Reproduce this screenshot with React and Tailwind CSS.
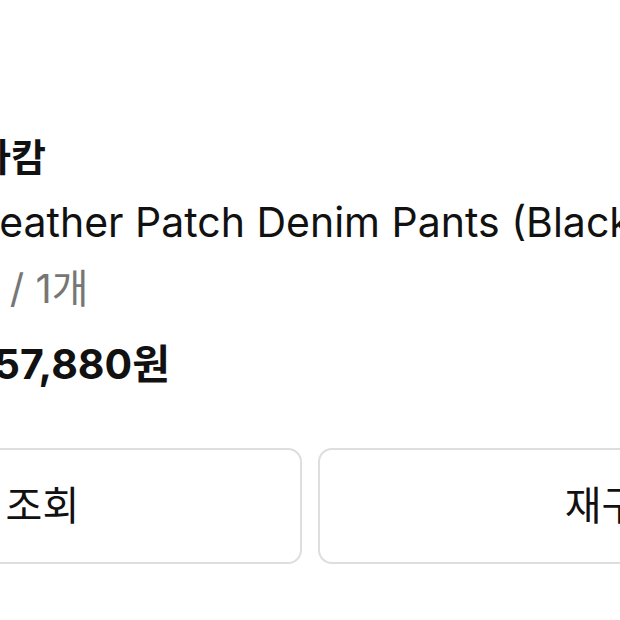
import React from "react";

const item = {
  brand: "아캄",
  name: "Leather Patch Denim Pants (Black)",
  option: "L / 1개",
  price: "157,880원",
};

export default function App() {
  return (
    <div
      className="w-[620px] h-[620px] overflow-hidden bg-white text-[#111]"
      style={{ fontFamily: 'Inter, "Noto Sans CJK KR", sans-serif' }}
    >
      <div className="-ml-[302px] w-[1224px] pt-[131px]">
        <div className="flex items-start gap-[30px]">
          <div className="w-[248px] h-[240px] shrink-0 rounded-lg bg-gray-100" />
          <div className="flex flex-col whitespace-nowrap">
            <div className="text-[38px] font-bold leading-[52px]">{item.brand}</div>
            <div className="mt-[13px] text-[41px] leading-[52px]">{item.name}</div>
            <div className="mt-[15px] text-[40px] leading-[52px] text-[#767676]">{item.option}</div>
            <div className="mt-[23px] text-[41px] font-bold leading-[52px]">{item.price}</div>
          </div>
        </div>
        <div className="mt-[58px] flex gap-4">
          <button className="h-[116px] flex-1 rounded-[14px] border-2 border-[#dedede] bg-white text-[40px] text-[#111]">
            배송 조회
          </button>
          <button className="h-[116px] flex-1 rounded-[14px] border-2 border-[#dedede] bg-white text-[40px] text-[#111]">
            재구매
          </button>
        </div>
      </div>
    </div>
  );
}
